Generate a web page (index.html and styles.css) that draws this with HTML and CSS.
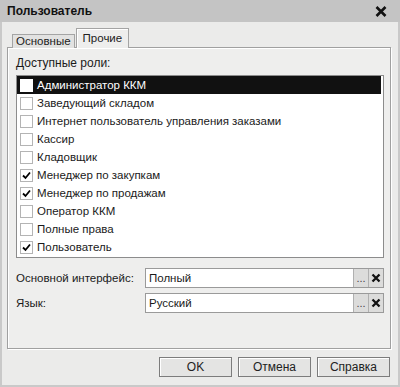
FILE: index.html
```html
<!DOCTYPE html>
<html lang="ru">
<head>
    <meta charset="UTF-8">
    <title>Пользователь</title>
    <link rel="stylesheet" href="styles.css">
</head>
<body>
<div class="window">
    <div class="titlebar">
        <span class="title">Пользователь</span>
        <svg class="close" width="12" height="11" viewBox="0 0 12 11">
            <path d="M1.5 1 L10.5 10 M10.5 1 L1.5 10" stroke="#111" stroke-width="2.6" fill="none"/>
        </svg>
    </div>
    <div class="content">
        <div class="tabs">
            <div class="tab">Основные</div>
            <div class="tab active">Прочие</div>
        </div>
        <div class="panel">
            <div class="caption">Доступные роли:</div>
            <div class="list">
                <div class="row selected"><span class="box"></span>Администратор ККМ</div>
                <div class="row"><span class="box"></span>Заведующий складом</div>
                <div class="row"><span class="box"></span>Интернет пользователь управления заказами</div>
                <div class="row"><span class="box"></span>Кассир</div>
                <div class="row"><span class="box"></span>Кладовщик</div>
                <div class="row"><span class="box"><svg width="11" height="11" viewBox="0 0 11 11"><path d="M2 5.5 L4.5 8 L9 2.5" stroke="#000" stroke-width="1.8" fill="none"/></svg></span>Менеджер по закупкам</div>
                <div class="row"><span class="box"><svg width="11" height="11" viewBox="0 0 11 11"><path d="M2 5.5 L4.5 8 L9 2.5" stroke="#000" stroke-width="1.8" fill="none"/></svg></span>Менеджер по продажам</div>
                <div class="row"><span class="box"></span>Оператор ККМ</div>
                <div class="row"><span class="box"></span>Полные права</div>
                <div class="row"><span class="box"><svg width="11" height="11" viewBox="0 0 11 11"><path d="M2 5.5 L4.5 8 L9 2.5" stroke="#000" stroke-width="1.8" fill="none"/></svg></span>Пользователь</div>
            </div>
            <div class="field-row">
                <span class="label">Основной интерфейс:</span>
                <div class="field">
                    <span class="value">Полный</span>
                    <span class="fbtn dots">...</span>
                    <span class="fbtn"><svg width="10" height="10" viewBox="0 0 10 10"><path d="M1.5 1.5 L8.5 8.5 M8.5 1.5 L1.5 8.5" stroke="#111" stroke-width="2.3" fill="none"/></svg></span>
                </div>
            </div>
            <div class="field-row">
                <span class="label">Язык:</span>
                <div class="field">
                    <span class="value">Русский</span>
                    <span class="fbtn dots">...</span>
                    <span class="fbtn"><svg width="10" height="10" viewBox="0 0 10 10"><path d="M1.5 1.5 L8.5 8.5 M8.5 1.5 L1.5 8.5" stroke="#111" stroke-width="2.3" fill="none"/></svg></span>
                </div>
            </div>
        </div>
        <div class="buttons">
            <button>OK</button>
            <button>Отмена</button>
            <button>Справка</button>
        </div>
    </div>
</div>
</body>
</html>
```

FILE: styles.css
```css
body {
    margin: 0;
    font-family: "Liberation Sans", Arial, sans-serif;
    font-size: 11.5px;
    color: #1a1a1a;
}
.window {
    width: 400px;
    height: 387px;
    box-sizing: border-box;
    background-color: #ebebea;
    border-left: 2px solid #c9c9c9;
    border-right: 2px solid #c9c9c9;
    border-bottom: 2px solid #c9c9c9;
}
.titlebar {
    height: 22px;
    margin: 0 -2px;
    padding: 0 13px 0 7px;
    background-color: #c4c4c4;
    display: flex;
    align-items: center;
    justify-content: space-between;
}
.title {
    font-weight: bold;
    font-size: 12px;
    color: #111;
}
.content {
    padding: 7px 7px 0 5px;
}
.tabs {
    display: flex;
    align-items: flex-end;
    padding-left: 5px;
    height: 19px;
    margin-bottom: -1px;
    position: relative;
}
.tab {
    height: 13px;
    line-height: 13px;
    padding: 0 3px;
    border: 1px solid #a4a4a4;
    border-bottom: none;
    background-color: #e2e2e1;
    margin-right: 1px;
    color: #222;
}
.tab.active {
    height: 19px;
    line-height: 19px;
    padding: 0 6px;
    background-color: #eeeeed;
    box-shadow: inset 1px 1px #fff;
}
.panel {
    border: 1px solid #a0a0a0;
    box-shadow: inset 1px 1px #fff, 1px 1px #fff;
    background-color: #eeeeed;
    padding: 8px 6px 35px 8px;
}
.caption {
    line-height: 14px;
    margin-bottom: 5px;
    font-size: 12px;
}
.list {
    height: 183px;
    box-sizing: border-box;
    border: 1px solid #8c8c8c;
    background-color: #fff;
    padding-right: 2px;
}
.row {
    height: 18px;
    display: flex;
    align-items: center;
    gap: 4px;
    padding-left: 3px;
    white-space: nowrap;
}
.row.selected {
    background-color: #111;
    color: #fff;
}
.box {
    width: 11px;
    height: 11px;
    border: 1px solid #b4b4b4;
    background-color: #fff;
    display: flex;
    flex-shrink: 0;
}
.row.selected .box {
    border-color: #fff;
}
.field-row {
    display: flex;
    align-items: center;
    margin-top: 10px;
}
.field-row + .field-row {
    margin-top: 5px;
}
.label {
    width: 129px;
}
.field {
    flex: 1;
    height: 20px;
    box-sizing: border-box;
    display: flex;
    border: 1px solid #9a9a9a;
    background-color: #fff;
}
.value {
    flex: 1;
    padding-left: 3px;
    line-height: 18px;
}
.fbtn {
    width: 15px;
    box-sizing: border-box;
    border-left: 1px solid #b0b0b0;
    background-color: #dcdcdb;
    display: flex;
    align-items: center;
    justify-content: center;
    color: #444;
}
.fbtn.dots {
    align-items: flex-end;
    padding-bottom: 3px;
    font-size: 11px;
    line-height: 11px;
}
.buttons {
    display: flex;
    justify-content: flex-end;
    gap: 6px;
    margin-top: 8px;
    padding-right: 1px;
}
button {
    width: 73px;
    height: 20px;
    font-family: "Liberation Sans", Arial, sans-serif;
    font-size: 12px;
    color: #222;
    background-color: #e4e4e3;
    border: 1px solid #7c7c7c;
    box-shadow: inset 1px 1px #fff;
    padding: 0;
}
```
